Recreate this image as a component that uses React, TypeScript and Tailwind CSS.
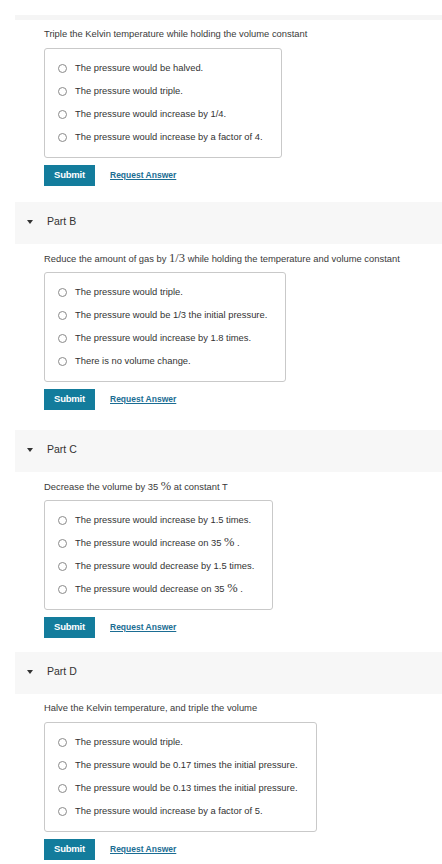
import React from "react";

type Part = {
  label?: string;
  gap: string;
  question: React.ReactNode;
  options: React.ReactNode[];
};

const MathSym = ({ children }: { children: React.ReactNode }) => (
  <span className="font-['Liberation_Serif',serif] text-[12.5px] leading-none">{children}</span>
);

const parts: Part[] = [
  {
    gap: "",
    question: "Triple the Kelvin temperature while holding the volume constant",
    options: [
      "The pressure would be halved.",
      "The pressure would triple.",
      "The pressure would increase by 1/4.",
      "The pressure would increase by a factor of 4.",
    ],
  },
  {
    label: "Part B",
    gap: "mt-[16px]",
    question: (
      <>
        Reduce the amount of gas by <MathSym>1/3</MathSym> while holding the temperature and volume constant
      </>
    ),
    options: [
      "The pressure would triple.",
      "The pressure would be 1/3 the initial pressure.",
      "The pressure would increase by 1.8 times.",
      "There is no volume change.",
    ],
  },
  {
    label: "Part C",
    gap: "mt-[20px]",
    question: (
      <>
        Decrease the volume by 35 <MathSym>%</MathSym> at constant T
      </>
    ),
    options: [
      "The pressure would increase by 1.5 times.",
      <>
        The pressure would increase on 35 <MathSym>%</MathSym> .
      </>,
      "The pressure would decrease by 1.5 times.",
      <>
        The pressure would decrease on 35 <MathSym>%</MathSym> .
      </>,
    ],
  },
  {
    label: "Part D",
    gap: "mt-[14px]",
    question: "Halve the Kelvin temperature, and triple the volume",
    options: [
      "The pressure would triple.",
      "The pressure would be 0.17 times the initial pressure.",
      "The pressure would be 0.13 times the initial pressure.",
      "The pressure would increase by a factor of 5.",
    ],
  },
];

function PartHeader({ label }: { label: string }) {
  return (
    <div className="ml-[15px] h-[42px] bg-[#f7f7f7] flex items-center pl-[12px] pb-[3px]">
      <span className="w-0 h-0 border-l-[3px] border-r-[3px] border-t-[4px] border-l-transparent border-r-transparent border-t-[#333]" />
      <span className="ml-[14px] text-[10.5px] text-[#333]">{label}</span>
    </div>
  );
}

function Question({ part }: { part: Part }) {
  return (
    <div className="pl-[44px]">
      <p className="text-[9.4px] leading-[12px] text-[#3a3a3a] mt-[8px] h-[12px] flex items-center whitespace-nowrap">
        <span>{part.question}</span>
      </p>
      <div className="mt-[8px] w-fit border border-[#c9c9c9] rounded-[3px] py-[8px] pl-[13px] pr-[18px] bg-white">
        {part.options.map((opt, i) => (
          <label key={i} className="h-[23px] flex items-center">
            <span className="w-[9px] h-[9px] rounded-full border border-[#8a8a8a] bg-white shrink-0" />
            <span className="ml-[8px] text-[9.4px] text-[#333] whitespace-nowrap">{opt}</span>
          </label>
        ))}
      </div>
      <div className="mt-[7px] flex items-center">
        <button className="w-[51px] h-[21px] bg-[#137c9c] text-white text-[9.5px] font-bold tracking-[-0.2px]">
          Submit
        </button>
        <a className="ml-[15px] text-[8.5px] font-bold text-[#1b6d93] underline">Request Answer</a>
      </div>
    </div>
  );
}

export default function App() {
  return (
    <div className="w-[442px] min-h-[864px] bg-white font-['Liberation_Sans',Arial,sans-serif] overflow-hidden">
      <div className="h-[15px]" />
      <div className="ml-[15px] h-[5px] bg-[#f5f5f5]" />
      {parts.map((part, i) => (
        <div key={i} className={part.gap}>
          {part.label && <PartHeader label={part.label} />}
          <Question part={part} />
        </div>
      ))}
    </div>
  );
}
